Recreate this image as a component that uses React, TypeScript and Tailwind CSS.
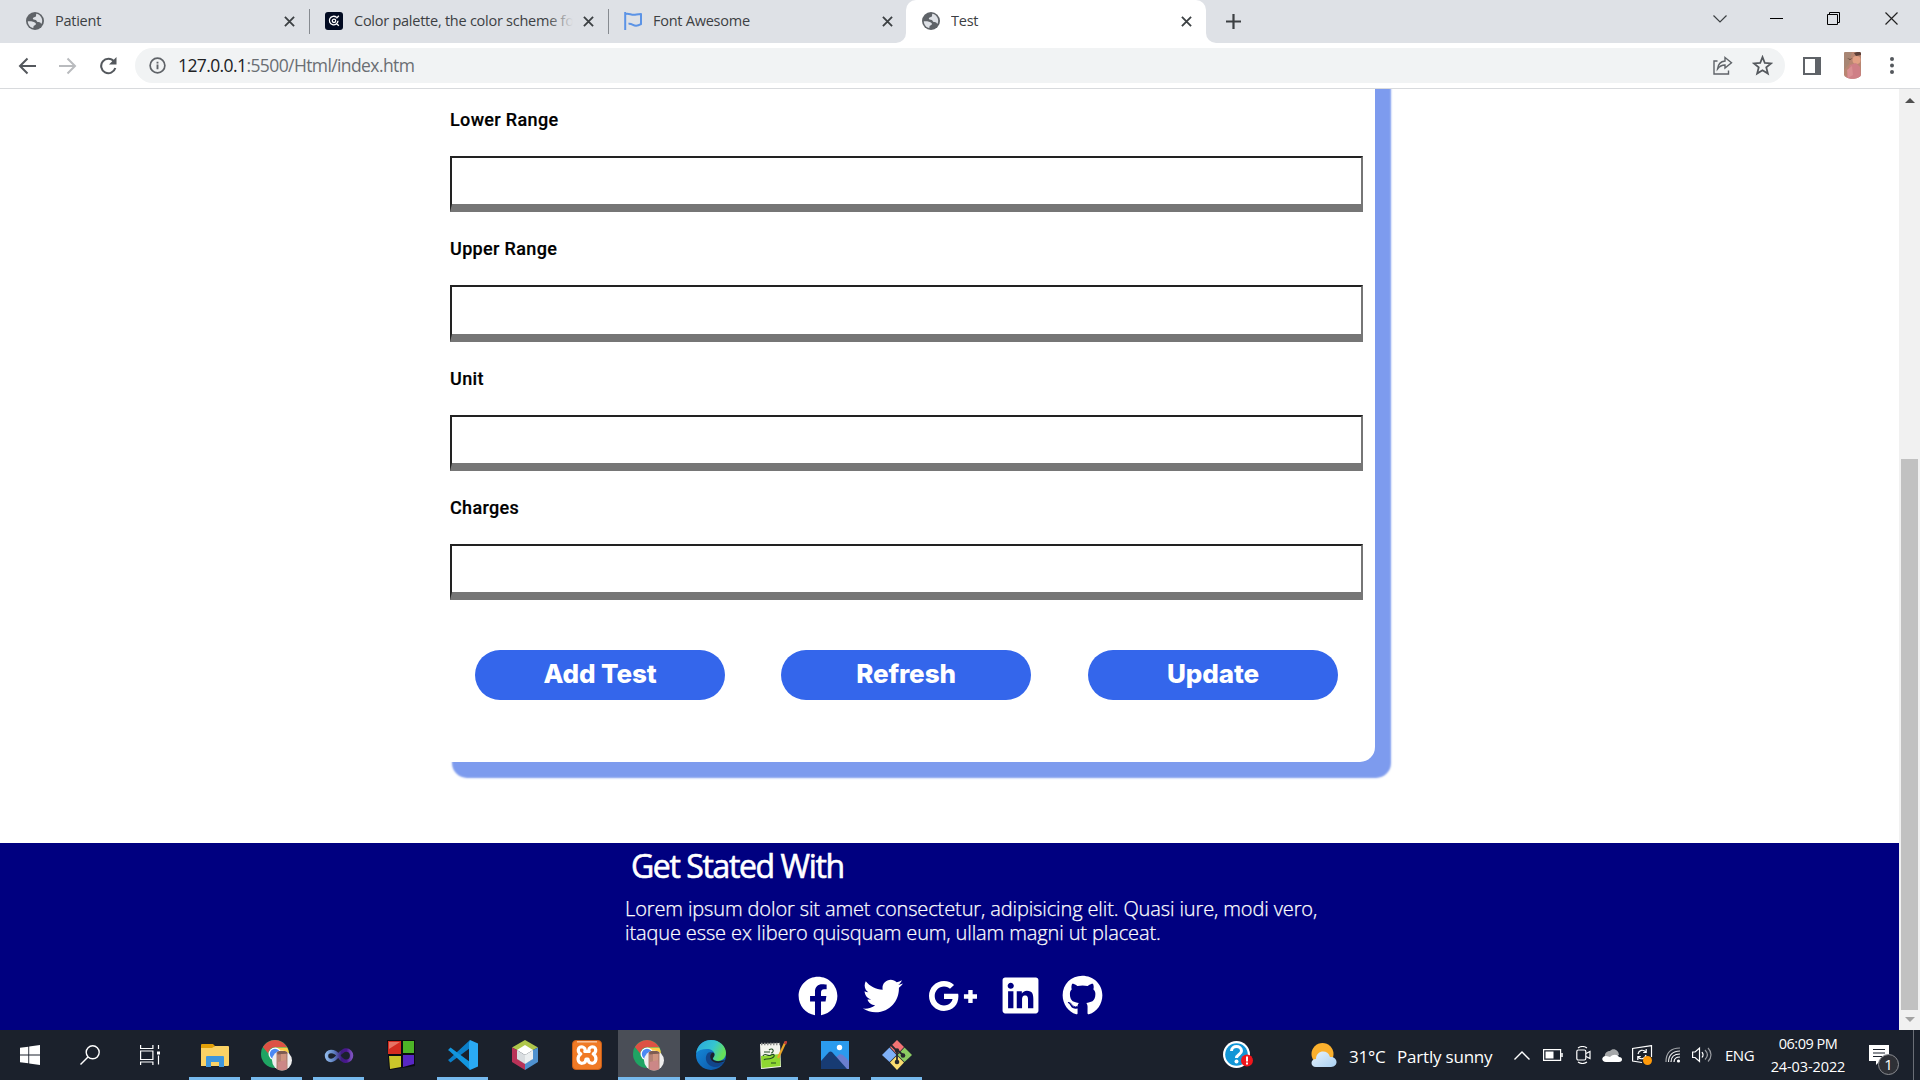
import type { ReactNode } from "react";
import { FaFacebook, FaTwitter, FaGooglePlusG, FaLinkedin, FaGithub } from "react-icons/fa";

const UI = "font-['Open_Sans',sans-serif]";

function Globe() {
  return (
    <svg viewBox="0 0 18 18" className="size-[18px] shrink-0">
      <circle cx="9" cy="9" r="9" fill="#5f6368" />
      <path d="M10.200 1.800c3.500.500 6 3.500 6 7.200-.1 1.200-.4 2.200-.9 3-.6-1.500-1.600-2.200-3.300-2-1.500-.2-1.200-1.500-2.200-2-1.500-.3-2.800-.2-3-1.500.3-1.500 2.200-1 3-2 .5-1 .2-1.700.4-2.700z" fill="#dee1e6" />
      <path d="M1.800 9.200c1.700.2 4.200-.4 6 .8 1.500.8 2.500 1.200 2 2.600-.7 1-2 .9-2.300 2l-.2 1.500C4.200 15.500 1.900 12.800 1.800 9.200z" fill="#dee1e6" />
    </svg>
  );
}

function CloseX() {
  return (
    <svg viewBox="0 0 12 12" className="size-[11px] shrink-0" stroke="#3c4043" strokeWidth="2" fill="none">
      <path d="M1 1l10 10M11 1L1 11" />
    </svg>
  );
}

function PaletteIcon() {
  return (
    <svg viewBox="0 0 18 18" className="size-[18px] shrink-0">
      <rect width="18" height="18" rx="3" fill="#020b22" />
      <g fill="none" stroke="#fff" strokeWidth="1.300">
        <path d="M11.500 5.300A4.300 4.300 0 1 0 13 8.800M13.800 3.800l-2.300 2.600M11.500 11.500l2.300 2.300" />
        <circle cx="9" cy="8.800" r="1.700" />
      </g>
    </svg>
  );
}

function FlagIcon() {
  return (
    <svg viewBox="0 0 18 18" className="size-[18px] shrink-0" fill="none" stroke="#5b93e6" strokeWidth="2" strokeLinejoin="round">
      <path d="M1.200 0v18M1.200 2.200c3-1.400 6 1 9 .6 2-.2 4-.8 6.800-.8v10.200c-3 1.600-6 1.800-8 .6-2-1-3-1.300-4.500-1" />
    </svg>
  );
}

function Tab({ icon, title, wide, fade, sep, end = "mr-[14px]" }: { icon: ReactNode; title: string; wide: string; fade?: boolean; sep?: boolean; end?: string }) {
  return (
    <div className={`flex h-[42px] items-center ${wide}`}>
      {icon}
      <div className="relative ml-[11px] min-w-0 flex-1 overflow-hidden whitespace-nowrap text-[14.5px] leading-[20px] tracking-[-0.25px] text-[#3c4043]">
        {title}
        {fade && <div className="absolute inset-y-0 right-0 w-[26px] bg-gradient-to-r from-[#dee1e6]/0 to-[#dee1e6]" />}
      </div>
      <div className={`ml-[10px] flex ${end}`}>
        <CloseX />
      </div>
      {sep && <div className="h-[25px] w-px bg-[#868a90]" />}
    </div>
  );
}

function TabStrip() {
  return (
    <div className="flex h-[43px] items-start bg-[#dee1e6]">
      <Tab icon={<Globe />} title="Patient" wide="ml-[26px] w-[284px]" sep />
      <Tab icon={<PaletteIcon />} title="Color palette, the color scheme fo" wide="ml-[15px] w-[284px]" fade sep />
      <Tab icon={<FlagIcon />} title="Font Awesome" wide="ml-[15px] w-[272px]" end="mr-[3px]" />
      <div className="h-[43px] w-[10px] bg-white">
        <div className="h-full w-full rounded-br-[10px] bg-[#dee1e6]" />
      </div>
      <div className="h-[43px] w-[300px] rounded-t-[10px] bg-white pl-[16px]">
        <Tab icon={<Globe />} title="Test" wide="w-[284px]" />
      </div>
      <div className="h-[43px] w-[10px] bg-white">
        <div className="h-full w-full rounded-bl-[10px] bg-[#dee1e6]" />
      </div>
      <svg viewBox="0 0 15 15" className="ml-[10px] mt-[14px] size-[15px]" stroke="#3c4043" strokeWidth="2.200">
        <path d="M7.500 0v15M0 7.500h15" />
      </svg>
      <div className="ml-auto mt-[12px] flex h-[13px] items-center">
        <svg viewBox="0 0 14 8" className="mr-[43px] h-[8px] w-[14px]" fill="none" stroke="#3c4043" strokeWidth="1.200"><path d="M.5.5L7 7l6.500-6.500" /></svg>
        <div className="mr-[44px] h-px w-[13px] bg-black" />
        <svg viewBox="0 0 13 13" className="mr-[45px] size-[13px]" fill="none" stroke="#000" strokeWidth="1"><path d="M.5 2.500h10v10h-10zM2.500 2.500v-2h10v10h-2" /></svg>
        <svg viewBox="0 0 13 13" className="mr-[22px] size-[13px]" fill="none" stroke="#222" strokeWidth="1.200"><path d="M.5.5l12 12M12.500.5l-12 12" /></svg>
      </div>
    </div>
  );
}

function Toolbar() {
  return (
    <div className="flex h-[46px] items-center border-b border-[#d8dadd] bg-white">
      <svg viewBox="0 0 18 18" className="ml-[18px] size-[18px]" fill="none" stroke="#54585d" strokeWidth="2"><path d="M18 9H2M9.500 1.500L2 9l7.500 7.500" /></svg>
      <svg viewBox="0 0 18 18" className="ml-[23px] size-[18px]" fill="none" stroke="#b9bbbe" strokeWidth="2"><path d="M0 9h16M8.500 1.500L16 9l-7.500 7.500" /></svg>
      <svg viewBox="0 0 18 18" className="ml-[22px] size-[18px]" fill="none" stroke="#54585d" strokeWidth="2.100"><path d="M15 4.500A7.200 7.200 0 1 0 16.300 11" /><path d="M17.500 0v7.500H10z" fill="#54585d" stroke="none" /></svg>
      <div className="ml-[18px] flex h-[35px] w-[1650px] items-center rounded-full bg-[#f1f3f4]">
        <svg viewBox="0 0 18 18" className="ml-[14px] size-[17px]" fill="none" stroke="#5f6368" strokeWidth="1.800"><circle cx="9" cy="9" r="7.800" /><path d="M9 8v5M9 5v1.800" strokeWidth="2" /></svg>
        <div className="mb-[2px] ml-[12px] text-[17.500px] leading-[24px] tracking-[-0.600px] text-[#6a6e73]">
          <span className="text-[#202124]">127.0.0.1</span>:5500/Html/index.htm
        </div>
        <svg viewBox="0 0 20 19" className="ml-auto h-[19px] w-[20px]" fill="none" stroke="#5f6368" strokeWidth="1.400"><path d="M4.500 5H1v13h14.500v-3.500" /><path d="M12 1.500l6.500 5.200L12 12V9C8.500 9 6.500 10.200 4.500 13c.500-4.500 3-7.500 7.500-8z" /></svg>
        <svg viewBox="0 0 20 20" className="ml-[19px] mr-[12px] size-[21px]" fill="none" stroke="#54585d" strokeWidth="1.700"><path d="M10 2l2.200 5.600 6 .4-4.600 3.800 1.500 5.900L10 14.500 4.900 17.700l1.500-5.900L1.800 8l6-.4z" /></svg>
      </div>
      <div className="ml-[18px] h-[18px] w-[18px] border-2 border-r-[6px] border-[#5f6368]" />
      <svg viewBox="0 0 17 27" className="ml-[23px] h-[27px] w-[17px]">
        <defs><clipPath id="avatar"><path d="M1 0h15l1 1v22c-2 5-15 5-17 0V1z" /></clipPath></defs>
        <g clipPath="url(#avatar)">
          <rect width="17" height="27" fill="#b98672" />
          <path d="M0 0h8L5 12 0 18z" fill="#a88674" />
          <path d="M10 1l3-1h4v3l-5 1zM3 6l3 1 3-1-3 2z" fill="#5d4038" />
          <circle cx="12.500" cy="8" r="4" fill="#e3a084" />
          <path d="M6 13l6-2 4 4 1 12H2z" fill="#cf7f86" />
          <path d="M3 18l5-4 1 9-5 3z" fill="#d98f92" />
        </g>
      </svg>
      <svg viewBox="0 0 4 17" className="ml-[29px] h-[17px] w-[4px]" fill="#54585d"><circle cx="2" cy="2" r="2" /><circle cx="2" cy="8.500" r="2" /><circle cx="2" cy="15" r="2" /></svg>
    </div>
  );
}

function Field({ label }: { label: string }) {
  return (
    <div className="h-[129.4px]">
      <div className="h-[49px] pt-[2px] font-['Roboto',sans-serif] text-[18px] font-medium leading-[22px] tracking-[0.350px] text-black [-webkit-text-stroke:0.200px_black]">{label}</div>
      <div className="h-[56.300px] w-[913px] border-2 border-b-[8px] border-b-[#767676] border-l-[#222] border-r-[#767676] border-t-[#222] bg-white" />
    </div>
  );
}

function Pill({ children }: { children: ReactNode }) {
  return (
    <button className="h-[50px] w-[250px] rounded-full bg-[#3466eb] pb-[2px] text-center font-['Inter',sans-serif] text-[26px] font-extrabold leading-[48px] tracking-[-0.100px] text-white">
      {children}
    </button>
  );
}

function Page() {
  return (
    <div className="flex h-[941px]">
      <main className="w-[1899px] overflow-hidden bg-white">
        <div className="-mt-[80px] ml-[436px] h-[753px] w-[939px] rounded-[15px] bg-white pl-[14px] pt-[98px] shadow-[16px_16px_2px_0px_#7d9bee]">
          <Field label="Lower Range" />
          <Field label="Upper Range" />
          <Field label="Unit" />
          <Field label="Charges" />
          <div className="mt-[25.400px] flex w-[913px] px-[25px]">
            <Pill>Add Test</Pill>
            <div className="w-[56px]" />
            <Pill>Refresh</Pill>
            <div className="w-[57px]" />
            <Pill>Update</Pill>
          </div>
        </div>
        <footer className="mt-[81px] h-[187px] bg-[#000080] text-white">
          <h2 className="ml-[631px] pt-[3px] text-[32px] font-medium leading-[40px] tracking-[-1.400px] [-webkit-text-stroke:0.600px_white]">Get Stated With</h2>
          <p className="ml-[625px] mt-[11px] whitespace-nowrap text-[20px] font-light leading-[24px] tracking-[-0.120px] [-webkit-text-stroke:0.250px_white]">
            Lorem ipsum dolor sit amet consectetur, adipisicing elit. Quasi iure, modi vero,
            <br />
            itaque esse ex libero quisquam eum, ullam magni ut placeat.
          </p>
          <div className="ml-[798px] mt-[30px] flex h-[41px] items-center">
            <FaFacebook className="size-[40px]" />
            <FaTwitter className="ml-[25px] size-[40px]" />
            <FaGooglePlusG className="ml-[25px] size-[50px]" />
            <FaLinkedin className="ml-[22px] size-[41px]" />
            <FaGithub className="ml-[21px] size-[41px]" />
          </div>
        </footer>
      </main>
      <aside className="flex w-[21px] flex-col items-center bg-[#f1f1f1]">
        <svg viewBox="0 0 10 5" className="mt-[9px] h-[5px] w-[10px]" fill="#505050"><path d="M0 5l5-5 5 5z" /></svg>
        <div className="mt-[356px] h-[551px] w-[17px] bg-[#c1c1c1]" />
        <svg viewBox="0 0 10 5" className="mt-[7px] h-[5px] w-[10px]" fill="#a3a3a3"><path d="M0 0l5 5 5-5z" /></svg>
      </aside>
    </div>
  );
}

function TaskItem({ children, running, active }: { children: ReactNode; running?: boolean; active?: boolean }) {
  return (
    <div className={`flex h-[50px] w-[62px] flex-col items-start ${active ? "bg-[#4a4e57]" : ""}`}>
      <div className="ml-[15px] flex h-[47px] w-[31px] items-center justify-center pt-[3px]">{children}</div>
      {active && <div className="h-[3px] w-[62px] bg-[#76b9ed]" />}
      {running && <div className="ml-[5px] h-[3px] w-[51px] bg-[#76b9ed]" />}
    </div>
  );
}

function Chrome() {
  return (
    <svg viewBox="0 0 31 31" className="size-[31px]">
      <defs><clipPath id="face"><circle cx="21" cy="20.500" r="10" /></clipPath></defs>
      <circle cx="14" cy="14" r="14" fill="#1fa463" />
      <path d="M1.900 7A14 14 0 0 1 26.100 7l-12.100.200c-4 0-6.500 2.800-6.600 6.600z" fill="#dd5144" />
      <path d="M14 7.400h12.300A14 14 0 0 1 14 28l6-10.500z" fill="#ffcd46" />
      <circle cx="14" cy="14" r="6.500" fill="#fff" />
      <circle cx="14" cy="14" r="5.200" fill="#4a89f4" />
      <circle cx="21" cy="20.500" r="10" fill="#efeeee" />
      <g clipPath="url(#face)">
        <path d="M15.500 12h11v19h-11z" fill="#b58274" />
        <path d="M16 11h10l.5 2.500-10 1z" fill="#7e5c52" />
        <path d="M20 14h5v7h-5z" fill="#cf9580" />
        <path d="M17 22l8-2 1 10h-9z" fill="#cc8787" />
      </g>
    </svg>
  );
}

function Taskbar() {
  return (
    <div className="flex h-[50px] items-start bg-[#1b212c] text-white">
      <div className="flex h-[50px] w-[60px] items-center justify-center">
        <svg viewBox="0 0 20 20" className="size-[20px]" fill="#fff"><path d="M0 2.800l8.300-1.100v7.800H0zM9.200 1.500L20 0v9.500H9.200zM0 10.400h8.300v7.900L0 17.200zM9.200 10.400H20V20L9.200 18.500z" /></svg>
      </div>
      <div className="flex h-[50px] w-[60px] items-center justify-center">
        <svg viewBox="0 0 20 20" className="size-[20px]" fill="none" stroke="#fff" strokeWidth="1.400"><circle cx="12.700" cy="7.300" r="6.500" /><path d="M8 12L.5 19.500" /></svg>
      </div>
      <div className="mr-[4px] flex h-[50px] w-[60px] items-center justify-center">
        <svg viewBox="0 0 20 20" className="size-[20px]" fill="none" stroke="#fff" strokeWidth="1.200"><path d="M.6 0v3.500h12.300V0M.6 6h12.300v8.500H.6zM.6 20v-3h12.300v3M18.500 0v4M18.500 10.500v9" /><path d="M17 6.500h3v3h-3z" fill="#fff" stroke="none" /></svg>
      </div>
      <TaskItem running>
        <svg viewBox="0 0 28 23" className="h-[23px] w-[28px]"><path d="M0 1q0-1 1-1h11l2 2-2 3H0z" fill="#e3a008" /><path d="M0 4h11l3-2h13q1 0 1 1v18q0 1-1 1H0z" fill="#fbd265" /><path d="M5 23V13q0-1 1-1h16q1 0 1 1v10h-5v-5h-8v5z" fill="#3f96dc" /></svg>
      </TaskItem>
      <TaskItem running><Chrome /></TaskItem>
      <TaskItem running>
        <svg viewBox="0 0 30 15" className="h-[15px] w-[30px]" fill="none" strokeWidth="3.400">
          <defs><linearGradient id="vs"><stop stopColor="#8db5e8" /><stop offset=".3" stopColor="#5d7fc0" /><stop offset=".6" stopColor="#3f1c80" /><stop offset=".8" stopColor="#4a1591" /><stop offset="1" stopColor="#7b50bd" /></linearGradient></defs>
          <path d="M15 8C12 4 10 3.500 7 3.500a4.300 4.300 0 0 0 0 9c6 0 9-10.500 15-10.500a5.500 5.500 0 0 1 0 11.200c-3 0-5-2-7-5.200z" stroke="url(#vs)" />
        </svg>
      </TaskItem>
      <TaskItem>
        <svg viewBox="0 0 28 30" className="h-[30px] w-[28px]"><path d="M0 0h28v26L2 30z" fill="#0b0c12" /><path d="M1 1h13v13H1z" fill="#d42c20" /><path d="M16 1h11v12H16z" fill="#4db427" /><path d="M2 16h12v11L3 29z" fill="#cbc62a" /><path d="M16 15h11v9l-11 3z" fill="#5827c4" /><path d="M2 2h11L2 9z" fill="#e67465" /></svg>
      </TaskItem>
      <TaskItem running>
        <svg viewBox="0 0 30 30" className="size-[30px]"><path d="M22 0L2 18.500 0 20l2.500 2.500L22 8z" fill="#0b7fc9" /><path d="M22 30L2 11.500 0 10l2.500-2.500L22 22z" fill="#1296df" /><path d="M22 0l8 3.500v23L22 30l-1-3V3z" fill="#2aaaf5" /></svg>
      </TaskItem>
      <TaskItem>
        <svg viewBox="0 0 26 30" className="h-[30px] w-[26px]"><path d="M13 0l13 7.500-6 3-7-4-7 4-6-3z" fill="#afc64b" /><path d="M0 7.500l6 3v9l7 4V30L0 22z" fill="#b93258" /><path d="M26 7.500V22l-13 8v-6.500l7-4v-9z" fill="#4f91cf" /><path d="M13 5l8 5-8 5-8-5z" fill="#fff" /><path d="M5 10l8 5v9l-8-5z" fill="#d9dde0" /><path d="M21 10l-8 5v9l8-5z" fill="#eceff0" /></svg>
      </TaskItem>
      <TaskItem>
        <svg viewBox="0 0 30 30" className="size-[30px]" fill="none">
          <rect x=".5" y=".5" width="29" height="29" rx="3.500" fill="#f07a26" stroke="#c65d18" />
          <path d="M5 1.800h20" stroke="#f8c49d" strokeWidth="1.500" />
          <path d="M15 11.500h-2.200C15 7 7 4.500 6.300 9.800c-.2 2.200 1 3.400 2.500 4.200-2 1.200-3 3-2.700 5.500.6 5.500 7.900 4.700 7.900-.5h2c0 5.200 7.300 6 7.900.5.300-2.500-.7-4.300-2.700-5.500 1.500-.8 2.700-2 2.500-4.200C23 4.500 15 7 17.200 11.500z" stroke="#fff" strokeWidth="3.200" strokeLinejoin="round" />
        </svg>
      </TaskItem>
      <TaskItem active><Chrome /></TaskItem>
      <TaskItem running>
        <svg viewBox="0 0 30 30" className="size-[30px]">
          <defs><linearGradient id="e1" x1="0" y1="0" x2="1" y2=".4"><stop stopColor="#2aa5df" /><stop offset=".6" stopColor="#35c5d0" /><stop offset="1" stopColor="#66e05a" /></linearGradient><linearGradient id="e2" x1="0" y1="0" x2="1" y2="1"><stop stopColor="#1590e0" /><stop offset="1" stopColor="#0c4fa0" /></linearGradient></defs>
          <circle cx="15" cy="15" r="15" fill="url(#e2)" />
          <path d="M.2 13C1.500 5 7.500 0 15 0c9 0 15 6.500 15 13 0 5-4 8-8 8-3 0-5-1-5-2.500 0-1 1.500-1.500 1.500-4C18.500 11 15 9 11 9 6 9 2 10.500.2 13z" fill="url(#e1)" />
          <path d="M11 14c-3 5 0 12 7 13 4 .5 8-2 10.300-5-4 2-8 1-10-1-3-2-3-5-1-8-2-2-5-1-6.300 1z" fill="#12458a" />
          <path d="M16.800 18.500c0-1 1.700-1.500 1.700-4 0-1.200-.7-2-1.700-2-3 1-3.500 6-.5 8.500 3 2.500 8 2.500 11.500.500l1.200-1.500C25 21.500 17 22 16.800 18.500z" fill="#1b212c" />
        </svg>
      </TaskItem>
      <TaskItem running>
        <svg viewBox="0 0 28 28" className="size-[28px]" fill="none"><path d="M1 3l20-1 1 24-20 2z" fill="#f4f5ee" /><path d="M2 15l19-2 .5 12-19 2z" fill="#8fd832" /><path d="M2 3h19" stroke="#8d8f8d" strokeWidth="2.500" strokeDasharray="1.500 1.500" /><path d="M4 15c2-4 5 1 8-1 3-2 5 1 1 3s-7 0-8 2M10 9c4-3 6 2 2 3M5 11h6M12 22h5" stroke="#214d22" strokeWidth="1.100" /><path d="M26.500 1L19 17" stroke="#e8a52a" strokeWidth="2.200" /><path d="M27.300 0L26 3" stroke="#c23d39" strokeWidth="2.600" /></svg>
      </TaskItem>
      <TaskItem running>
        <svg viewBox="0 0 28 28" className="size-[28px]"><path d="M0 0h28v28H0z" fill="#2b9bee" /><path d="M10 20l9-7 3 1 6 6v8H10z" fill="#6b7ed0" /><path d="M0 20l8-9q1.500-1 3 0l15 17H0z" fill="#173b73" /><circle cx="18.500" cy="6.500" r="2.700" fill="#fff" /></svg>
      </TaskItem>
      <TaskItem running>
        <svg viewBox="0 0 30 30" className="size-[30px]"><path d="M15 0l7 7-7 7.500L8 7z" fill="#f47474" /><path d="M7.500 7.500l7 7.500-7 7-7.500-7z" fill="#7fb0f7" /><path d="M22.500 7.500L30 15l-7.500 7-7-7z" fill="#8bca62" /><path d="M15 15.500l7 7-7 7.500-7-7.500z" fill="#fadd70" /><g stroke="#25282e" strokeWidth="1.800" fill="none"><path d="M9 5l6 6v11M15 10l6 5" /></g><g fill="#25282e"><circle cx="15" cy="10.500" r="2.200" /><circle cx="15" cy="22" r="2.300" /><circle cx="21" cy="15.500" r="2.300" /></g></svg>
      </TaskItem>
      <div className="ml-[295px] flex h-[50px] items-center">
        <svg viewBox="0 0 31 28" className="h-[28px] w-[31px]"><circle cx="13.500" cy="13.500" r="13.500" fill="#fff" /><circle cx="13.500" cy="13.500" r="11.300" fill="#1296d6" /><path d="M8.500 10c0-6 10-6 10 0 0 3.500-5 3.500-5 7" fill="none" stroke="#fff" strokeWidth="3" /><circle cx="13.500" cy="20.500" r="2" fill="#fff" /><circle cx="24" cy="19.500" r="6" fill="#f0161b" /><path d="M24 15.500v5M24 21.500v2" stroke="#fff" strokeWidth="2" /></svg>
        <svg viewBox="0 0 26 24" className="ml-[57px] h-[24px] w-[26px]"><defs><linearGradient id="cl" x2="1" y2="1"><stop stopColor="#e8f3fd" /><stop offset="1" stopColor="#a9d0f2" /></linearGradient></defs><circle cx="11.500" cy="11" r="11" fill="#fbb02d" /><path d="M5 24c-6 0-6-8 0-8 0-9 12-10 14-2 8-1 9 10 1 10z" fill="url(#cl)" /></svg>
        <div className="ml-[12px] mt-[3px] w-[48px] whitespace-nowrap text-[17px] leading-[24px] tracking-[-0.200px]">31°C</div>
        <div className="mt-[3px] w-[117px] whitespace-nowrap text-[17px] leading-[24px] tracking-[-0.200px]">Partly sunny</div>
        <svg viewBox="0 0 16 9" className="h-[9px] w-[16px]" fill="none" stroke="#fff" strokeWidth="1.400"><path d="M.5 8.500L8 1l7.500 7.500" /></svg>
        <svg viewBox="0 0 20 12" className="ml-[13px] h-[12px] w-[20px]" fill="none" stroke="#fff" strokeWidth="1.200"><path d="M.6.6h17v10.800H.600z" /><path d="M2.500 2.500h8v7h-8z" fill="#fff" stroke="none" /><path d="M19 4v4" strokeWidth="1.500" /></svg>
        <svg viewBox="0 0 15 18" className="ml-[13px] h-[18px] w-[15px]" fill="none" stroke="#fff" strokeWidth="1.200"><rect x=".8" y="4" width="9" height="10" rx="1.500" /><path d="M10 7.500l4-2v7l-4-2M2 2c3-2 6-2 9 0M2 16c3 2 6 2 9 0" /></svg>
        <svg viewBox="0 0 20 13" className="ml-[11px] h-[13px] w-[20px]"><path d="M3 9C2 4 5 2 8 2c3-4 9-1 9 4l-8 4z" fill="#a5a7a9" /><path d="M4 13c-5 0-5-6 0-6 2 0 3 1 4 1 3-3 7-3 9 0 4 0 4 5 0 5z" fill="#fff" /></svg>
        <svg viewBox="0 0 21 20" className="ml-[10px] h-[20px] w-[21px]" fill="none" stroke="#fff" strokeWidth="1.200"><path d="M10 17.500L.6 16V3.500L19.500.600V12" /><path d="M6 9c1-4 5-5 8-2M14.200 4v3.500h-3M14 10c-1 4-5 5-8 2M5.800 15v-3.500h3" /><circle cx="15.500" cy="15.500" r="4.500" fill="#ff9a0a" stroke="none" /></svg>
        <svg viewBox="0 0 16 16" className="ml-[12px] size-[16px]" fill="none" stroke="#fff" strokeWidth="1.200"><path d="M9 15c0-3 2-5 6-5M6 15c0-5 3-8 9-8" /><path d="M3.500 15C3.500 8 8 4 15 4" opacity=".9" /><path d="M1 15C1 6 6 1 15 1" opacity=".6" /><circle cx="13.500" cy="14" r="1.600" fill="#fff" stroke="none" /></svg>
        <svg viewBox="0 0 21 18" className="ml-[11px] h-[18px] w-[21px]" fill="none" stroke="#fff" strokeWidth="1.200"><path d="M.6 6h2.500L7.500 2v13.500L3.100 11.500H.600zM10 6c1.500 2 1.500 3.500 0 5.500" /><path d="M13 4c3 3 3 6.500 0 9.500M16 2c4 4 4 9.500 0 13.500" opacity=".55" /></svg>
        <div className="ml-[12px] w-[43px] text-[15px] leading-[20px] tracking-[-0.500px]">ENG</div>
        <div className="w-[80px] whitespace-nowrap text-center text-[14.500px] leading-[23px] tracking-[-0.100px]">
          <div className="tracking-[-0.500px]">06:09 PM</div>
          <div>24-03-2022</div>
        </div>
        <div className="relative ml-[21px] mt-[10px] h-[30px] w-[30px]">
          <svg viewBox="0 0 20 20" className="h-[20px] w-[20px]"><path d="M0 0h20v16h-9l-4 4v-4H0z" fill="#fff" /><path d="M4 4.500h12M4 8h12M4 11.500h9" stroke="#1b212c" strokeWidth="1.200" /></svg>
          <div className="absolute left-[9px] top-[9px] flex size-[21px] items-center justify-center rounded-full border border-[#8b8d92] bg-[#2e3036] text-[15px] leading-none">1</div>
        </div>
        <div className="ml-[14px] h-[50px] w-px bg-[#6a6e76]" />
      </div>
    </div>
  );
}

export default function App() {
  return (
    <div className={`${UI} h-[1080px] w-[1920px] overflow-hidden bg-white`}>
      <TabStrip />
      <Toolbar />
      <Page />
      <Taskbar />
    </div>
  );
}
